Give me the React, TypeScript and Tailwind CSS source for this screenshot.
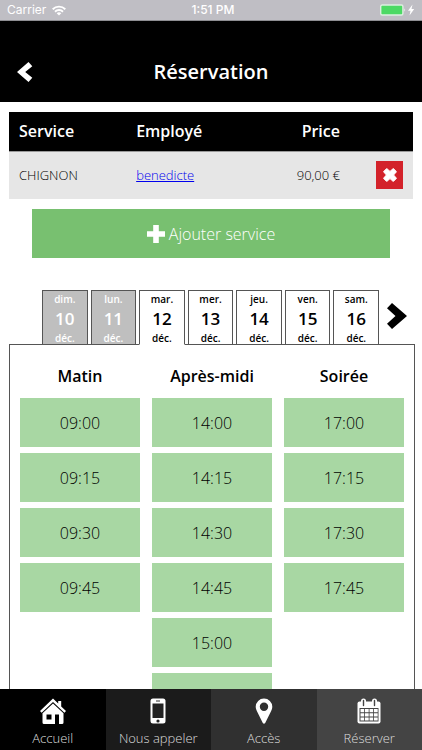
import React, { useState } from "react";

interface Day {
  name: string;
  date: number;
  disabled?: boolean;
}

interface Period {
  label: string;
  slots: string[];
}

const days: Day[] = [
  { name: "dim.", date: 10, disabled: true },
  { name: "lun.", date: 11, disabled: true },
  { name: "mar.", date: 12 },
  { name: "mer.", date: 13 },
  { name: "jeu.", date: 14 },
  { name: "ven.", date: 15 },
  { name: "sam.", date: 16 },
];

const periods: Period[] = [
  { label: "Matin", slots: ["09:00", "09:15", "09:30", "09:45"] },
  {
    label: "Après-midi",
    slots: ["14:00", "14:15", "14:30", "14:45", "15:00", "15:15"],
  },
  { label: "Soirée", slots: ["17:00", "17:15", "17:30", "17:45"] },
];

function StatusBar() {
  return (
    <div className="grid grid-cols-3 items-center h-[21px] shrink-0 px-[7px] bg-[#bfbec4] border-b border-[#8e8e92] text-white text-xs leading-5 font-['Inter',sans-serif]">
      <div className="flex items-center gap-[6px]">
        <span>Carrier</span>
        <svg width="14" height="11" viewBox="0 0 14 11" fill="none" stroke="currentColor" strokeWidth="1.9">
          <path d="M.7 4.2a9 9 0 0 1 12.6 0M3 6.7a5.7 5.7 0 0 1 8 0" />
          <path d="M7 10.6 4.7 8.3a3.3 3.3 0 0 1 4.6 0z" fill="currentColor" stroke="none" />
        </svg>
      </div>
      <span className="pl-1 text-center font-medium">1:51 PM</span>
      <svg className="justify-self-end" width="36" height="12" viewBox="0 0 36 12">
        <rect x="1.700" y="1" width="22.200" height="10" rx="1.500" fill="#4cd964" stroke="#dcefdf" strokeWidth="1.400" />
        <path d="M25.500 4.300q1.400 1.700 0 3.400z" fill="#fff" />
        <path d="m33.500 .5-4.500 6.300h2.500L30.500 11.500l4.700-6.500h-2.700z" fill="#fff" />
      </svg>
    </div>
  );
}

function Header() {
  return (
    <header className="grid grid-cols-[1fr_auto_1fr] items-center h-[81px] shrink-0 px-[17px] pt-[20px] bg-black text-white">
      <button aria-label="Retour" className="justify-self-start cursor-pointer">
        <svg width="16" height="20" viewBox="0 0 16 20">
          <path d="M11.500 0 15.300 4.300 8.200 10l7.100 5.700-3.800 4.300L0 10z" fill="currentColor" />
        </svg>
      </button>
      <h1 className="text-xl font-semibold">Réservation</h1>
    </header>
  );
}

function ServiceTable() {
  return (
    <table className="w-full border-collapse">
      <thead>
        <tr className="h-[39px] bg-black text-white text-left text-base border-b border-[#999]">
          <th className="w-[29%] pl-[10px] font-semibold">Service</th>
          <th className="w-[29%] pl-[10px] font-semibold">Employé</th>
          <th className="text-right font-semibold">Price</th>
          <th className="w-[73px]"></th>
        </tr>
      </thead>
      <tbody>
        <tr className="h-12 bg-[#e6e6e6] text-[13px] font-light">
          <td className="pl-[10px]">CHIGNON</td>
          <td className="pl-[10px]">
            <a href="#" className="text-[#0000ee] underline">
              benedicte
            </a>
          </td>
          <td className="text-right">90,00 €</td>
          <td className="pr-[10px]">
            <button
              aria-label="Supprimer"
              className="flex items-center justify-center w-[27px] h-7 ml-auto bg-[#d3222a] text-white cursor-pointer"
            >
              <svg width="14" height="14" viewBox="0 0 14 14">
                <path
                  d="M3.700.5 7 3.400 10.300.5 13.500 3.700 10.600 7l2.900 3.300-3.200 3.200L7 10.600l-3.300 2.900L.5 10.300 3.400 7 .5 3.700z"
                  fill="currentColor"
                  stroke="currentColor"
                  strokeLinejoin="round"
                />
              </svg>
            </button>
          </td>
        </tr>
      </tbody>
    </table>
  );
}

interface DayTabProps {
  day: Day;
  active: boolean;
  onSelect: () => void;
}

function DayTab({ day, active, onSelect }: DayTabProps) {
  return (
    <button
      disabled={day.disabled}
      onClick={onSelect}
      className={`flex flex-col items-center flex-1 h-[55px] border border-[#555] text-[10px] font-semibold leading-4 ${
        day.disabled ? "bg-[#bfbfbf] text-white" : "bg-white text-black"
      } ${active ? "border-b-white" : ""}`}
    >
      <span>{day.name}</span>
      <span className="text-[17px] leading-6">{day.date}</span>
      <span className="leading-[14px]">déc.</span>
    </button>
  );
}

function NavBar() {
  return (
    <nav className="grid grid-cols-4 h-[61px] shrink-0 text-[13px] leading-5 font-light text-[#ddd]">
      <a href="#" className="flex flex-col items-center pt-[9px] gap-1 bg-black">
        <svg width="26" height="26" viewBox="0 0 26 26" fill="#fff">
          <path d="M13 .5 0 13l1.600 1.800L13 4l11.400 10.800L26 13l-4.800-4.600V3h-3v2.500z" />
          <path d="M13 5.400 2.500 15.300V24.500Q2.500 26 4 26h11v-9.500h4V26h3q1.500 0 1.500-1.500V15.300zM6.500 16.500h5v5h-5z" fillRule="evenodd" />
        </svg>
        <span>Accueil</span>
      </a>
      <a href="#" className="flex flex-col items-center pt-[9px] gap-1 bg-[#1b1b1b]">
        <svg width="16" height="26" viewBox="0 0 16 26">
          <rect x=".5" y=".5" width="15" height="25" rx="2.500" fill="#fff" />
          <path d="M2.500 5.500h11v14.500h-11z" fill="#222" />
          <path d="M6 3h4" stroke="#333" />
          <circle cx="8" cy="23" r="1.600" fill="#222" />
        </svg>
        <span>Nous appeler</span>
      </a>
      <a href="#" className="flex flex-col items-center pt-[9px] gap-1 bg-[#303030]">
        <svg width="18" height="26" viewBox="0 0 18 26">
          <path d="M9 .5a8.300 8.300 0 0 0-8.300 8.300c0 2.200 1 4 2 6L7.800 25q1.200 1.600 2.400 0l5.100-10.200c1-2 2-3.800 2-6A8.300 8.300 0 0 0 9 .5zM9 4.600a4.200 4.200 0 1 1 0 8.400 4.200 4.200 0 0 1 0-8.400z" fill="#fff" fillRule="evenodd" />
        </svg>
        <span>Accès</span>
      </a>
      <a href="#" className="flex flex-col items-center pt-[9px] gap-1 bg-[#444]">
        <svg width="24" height="26" viewBox="0 0 24 26">
          <path d="M2.500 3.500h19q2 0 2 2V23.500q0 2-2 2h-19q-2 0-2-2V5.500q0-2 2-2z" fill="#fff" />
          <rect x="4" y=".5" width="5" height="8" rx="2.500" fill="#fff" />
          <rect x="15" y=".5" width="5" height="8" rx="2.500" fill="#fff" />
          <path d="M6.500 2.500v5M17.500 2.500v5" stroke="#444" strokeWidth="1.400" strokeLinecap="round" />
          <path d="M2.500 10h19v13.500h-19z" fill="#444" />
          <path
            d="M3.500 11h3.700v3.200H3.500zm4.500 0h3.700v3.200H8zm4.500 0h3.700v3.200h-3.700zm4.500 0h3.700v3.200H17zM3.500 15.200h3.700v3.200H3.500zm4.500 0h3.700v3.200H8zm4.500 0h3.700v3.200h-3.700zm4.500 0h3.700v3.200H17zM3.500 19.400h3.700v3.200H3.500zm4.500 0h3.700v3.200H8zm4.500 0h3.700v3.200h-3.700zm4.500 0h3.700v3.200H17z"
            fill="#fff"
          />
        </svg>
        <span>Réserver</span>
      </a>
    </nav>
  );
}

function App() {
  const [selected, setSelected] = useState(12);

  return (
    <div className="flex flex-col h-screen bg-white text-black font-['Open_Sans',sans-serif]">
      <StatusBar />
      <Header />
      <main className="flex-1 min-h-0 overflow-y-auto [scrollbar-width:none]">
        <div className="px-[9px] pt-[10px]">
          <ServiceTable />
        </div>
        <button className="flex items-center justify-center gap-1 w-[85%] h-[49px] mx-auto mt-[10px] bg-[#78c070] text-white font-light cursor-pointer">
          <svg width="18" height="18" viewBox="0 0 18 18">
            <path d="M6.200 0h5.600v6.200H18v5.600h-6.200V18H6.200v-6.200H0V6.200h6.200z" fill="currentColor" />
          </svg>
          Ajouter service
        </button>
        <section className="mt-8 pl-[9px] pr-[7px]">
          <div className="relative flex items-center pl-[33px] pr-2 -mb-px">
            <div className="flex flex-1 gap-[3px]">
              {days.map((day) => (
                <DayTab
                  key={day.date}
                  day={day}
                  active={day.date === selected}
                  onSelect={() => setSelected(day.date)}
                />
              ))}
            </div>
            <button aria-label="Semaine suivante" className="pl-2 pb-1 cursor-pointer">
              <svg width="20" height="26" viewBox="0 0 20 26">
                <path d="M5 0 20 13 5 26 0 20.800 8.500 13 0 5.200z" fill="currentColor" />
              </svg>
            </button>
          </div>
          <div className="grid grid-cols-3 gap-3 border border-[#555] px-[10px] pt-[19px]">
            {periods.map((period) => (
              <div key={period.label} className="flex flex-col gap-[6px]">
                <h2 className="mb-[3px] text-center text-base leading-[25px] font-semibold">
                  {period.label}
                </h2>
                {period.slots.map((slot) => (
                  <button
                    key={slot}
                    className="h-[49px] bg-[#a8d7a3] text-base font-light cursor-pointer"
                  >
                    {slot}
                  </button>
                ))}
              </div>
            ))}
          </div>
        </section>
      </main>
      <NavBar />
    </div>
  );
}

export default App;
